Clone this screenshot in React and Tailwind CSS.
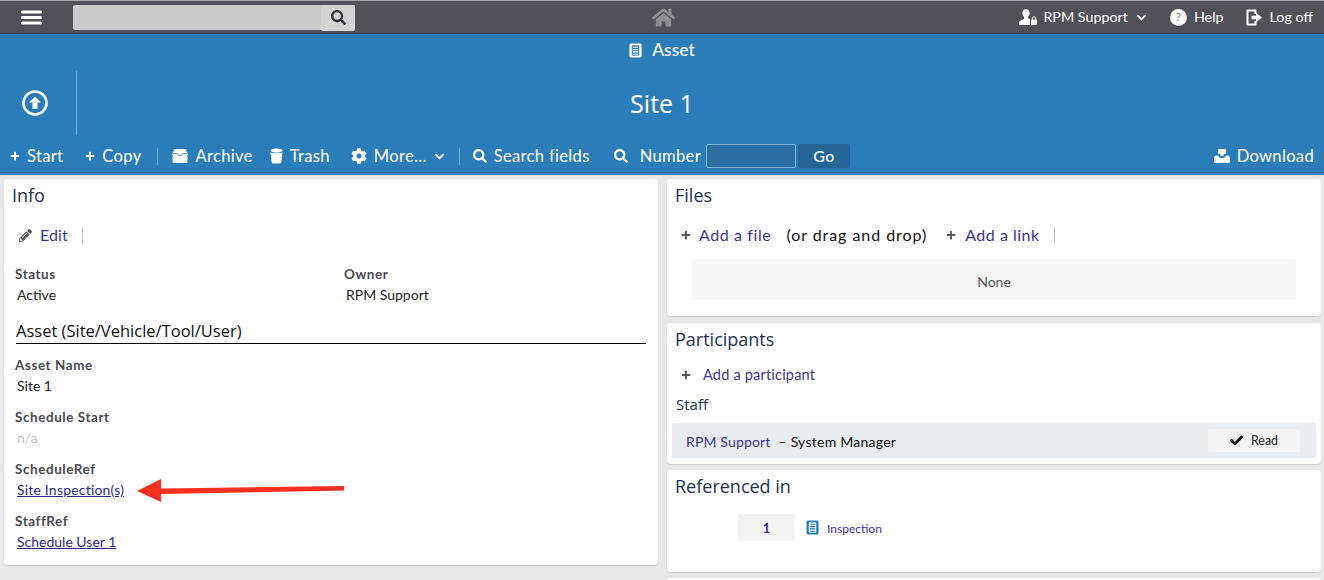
import { FaSearch, FaHome, FaCog, FaChevronDown, FaPencilAlt, FaCheck, FaPlus } from 'react-icons/fa';

const body = "font-['Lato','Liberation_Sans',sans-serif]";

function DocIcon({ className }) {
    return (
        <svg viewBox="0 0 14 16" className={className}>
            <rect x="0.5" y="0.5" width="13" height="15" rx="1.5" fill="currentColor" />
            <rect x="3" y="2.5" width="8" height="11" fill="var(--doc-bg)" />
            <path d="M4 4.5h6M4 7h6M4 9.5h6M4 12h6" stroke="currentColor" strokeWidth="1.2" />
        </svg>
    );
}

function ArchiveIcon() {
    return (
        <svg viewBox="0 0 18 16" className="w-[18px] h-[16px] text-white">
            <path d="M3.500 1h11l2 4.500v8a1.500 1.500 0 0 1-1.500 1.500H3a1.500 1.500 0 0 1-1.500-1.500v-8z" fill="currentColor" />
            <path d="M2 5.500h4.500l1 2h3l1-2H16" fill="none" stroke="#2a7db8" strokeWidth="0.8" />
        </svg>
    );
}

function TrashIcon() {
    return (
        <svg viewBox="0 0 13 16" className="w-[13px] h-[16px] text-white">
            <ellipse cx="6.500" cy="2.500" rx="6" ry="2" fill="currentColor" />
            <path d="M0.500 4.200c2 1.400 10 1.400 12 0l-1.200 10a1.500 1.500 0 0 1-1.500 1.300H3.200a1.500 1.500 0 0 1-1.500-1.300z" fill="currentColor" />
        </svg>
    );
}

function DownloadIcon() {
    return (
        <svg viewBox="0 0 16 14" className="w-[16px] h-[14px] text-white">
            <path d="M4 0h8v5h-2.500v2h-3V5H4z" fill="currentColor" />
            <path d="M1.500 6.500H4l2 2.500h4l2-2.500h2.500l1.500 2V13a1 1 0 0 1-1 1H1a1 1 0 0 1-1-1V8.500z" fill="currentColor" />
        </svg>
    );
}

function UserLockIcon() {
    return (
        <svg viewBox="0 0 18 16" className="w-[18px] h-[16px] text-white">
            <path d="M7 0c2.200 0 3.600 1.800 3.600 4.200 0 1.600-.7 3-1.600 3.800v1.200l2 .9V16H0v-2.300c0-1.600 3.200-2.900 5-3.600V8C4.100 7.200 3.400 5.800 3.400 4.200 3.400 1.800 4.800 0 7 0z" fill="currentColor" />
            <rect x="12" y="10.500" width="6" height="5.500" rx="0.800" fill="currentColor" />
            <path d="M13.300 10.800V9.500a1.700 1.700 0 0 1 3.400 0v1.300" fill="none" stroke="currentColor" strokeWidth="1" />
        </svg>
    );
}

function LogOffIcon() {
    return (
        <svg viewBox="0 0 16 17" className="w-[16px] h-[17px]">
            <path d="M9.500 5V1.500H1.500v14h8V12" fill="none" stroke="white" strokeWidth="2" strokeLinejoin="round" />
            <path d="M5.500 6.800h4.500V3.800l6 4.700-6 4.700v-3H5.500z" fill="white" />
        </svg>
    );
}

function UpCircleIcon() {
    return (
        <svg viewBox="0 0 26 26" className="w-[26px] h-[26px]">
            <circle cx="13" cy="13" r="11.500" fill="none" stroke="white" strokeWidth="2.600" />
            <path d="M13 6.500l6 6h-3.400V19h-5.200v-6.500H7z" fill="white" />
        </svg>
    );
}

function ToolItem({ icon, label, className = '' }) {
    return (
        <span className={`flex items-center gap-[7px] ${className}`}>
            {icon}
            <span>{label}</span>
        </span>
    );
}

function Field({ label, value, className = '' }) {
    return (
        <div className={className}>
            <div className="text-[13.500px] font-bold leading-[18px] text-[#4a4a52] tracking-[0.55px]">{label}</div>
            <div className="mt-[2px] ml-[2px] text-[14px] leading-[20px] text-[#222]">{value}</div>
        </div>
    );
}

function Panel({ title, className = '', children }) {
    return (
        <section className={`bg-white rounded-[4px] shadow-[0_1px_1px_#c8c8c8] ${className}`}>
            <h2 className="pl-2 pt-[4px] font-['Open_Sans',sans-serif] text-[18px] leading-[24px] text-[#1c3350]">{title}</h2>
            {children}
        </section>
    );
}

export default function App() {
    return (
        <div className={`${body} h-[580px] overflow-hidden bg-[#e8e8e8]`}>
            {/* top bar */}
            <header className="h-[34px] flex items-center bg-[#525157] border-t border-t-[#a9a9a9] border-b border-b-[#3d4650] text-white">
                <svg viewBox="0 0 21 15" className="w-[21px] h-[15px] ml-[21px]">
                    <path d="M1.500 2h18M1.500 7.500h18M1.500 13h18" stroke="white" strokeWidth="3" strokeLinecap="round" />
                </svg>
                <div className="ml-[31px] w-[282px] h-[25px] flex justify-end rounded-[2px] bg-[#cbcbcb]">
                    <span className="w-[34px] h-[26px] flex items-center justify-center bg-[#d2d2d2] rounded-[2px] text-[#333338]">
                        <FaSearch size={15} />
                    </span>
                </div>
                <div className="flex-1 flex justify-center">
                    <FaHome size={23} className="text-[#8e8e92] mr-[48px]" />
                </div>
                <nav className="flex items-center text-[14.300px] mr-[11px]">
                    <UserLockIcon />
                    <span className="ml-[6px]">RPM Support</span>
                    <FaChevronDown size={11} className="ml-[8px]" />
                    <span className="ml-[23px] w-[17px] h-[17px] flex items-center justify-center rounded-full bg-white text-[#77777c] text-[11px]">?</span>
                    <span className="ml-[7px]">Help</span>
                    <span className="ml-[22px]"><LogOffIcon /></span>
                    <span className="ml-[8px]">Log off</span>
                </nav>
            </header>

            {/* blue header */}
            <div className="h-[141px] bg-[#2a7db8] text-white flex flex-col">
                <div className="h-[32px] flex items-center justify-center gap-[10px] text-[17.500px] font-medium [--doc-bg:#2a7db8]">
                    <DocIcon className="w-[13px] h-[15px] text-white" />
                    <span>Asset</span>
                </div>
                <div className="mt-[5px] h-[64px] flex items-center">
                    <div className="w-[77px] h-full flex items-center justify-center border-r border-r-[#76a9d0] pr-[7px]">
                        <UpCircleIcon />
                    </div>
                    <div className="flex-1 text-center pr-[77px] font-['Open_Sans',sans-serif] font-medium text-[25px] leading-[32px]">Site 1</div>
                </div>
                <div className="mt-[2px] h-[38px] flex items-center text-[16.600px] tracking-[0.3px] pl-[10px] pr-[10px]">
                    <ToolItem icon={<FaPlus size={10} />} label="Start" className="gap-[6px]" />
                    <ToolItem icon={<FaPlus size={10} />} label="Copy" className="ml-[22px] gap-[6px]" />
                    <span className="ml-[15px] w-px h-[17px] bg-[#76a9d0]" />
                    <ToolItem icon={<ArchiveIcon />} label="Archive" className="ml-[13px]" />
                    <ToolItem icon={<TrashIcon />} label="Trash" className="ml-[17px]" />
                    <ToolItem icon={<FaCog size={16} />} label="More..." className="ml-[21px]" />
                    <FaChevronDown size={11} className="ml-[7px]" />
                    <span className="ml-[14px] w-px h-[17px] bg-[#76a9d0]" />
                    <ToolItem icon={<FaSearch size={14} />} label="Search fields" className="ml-[13px]" />
                    <ToolItem icon={<FaSearch size={14} />} label="Number" className="ml-[24px] gap-[12px]" />
                    <span className="ml-[5px] w-[90px] h-[24px] rounded-[2px] bg-[#2a72a6] border border-[#7fb0d3]" />
                    <span className="ml-[2px] w-[52px] h-[24px] flex items-center justify-center rounded-[2px] bg-[#226695] text-[16px] font-medium">Go</span>
                    <span className="ml-auto"><ToolItem icon={<DownloadIcon />} label="Download" /></span>
                </div>
            </div>

            {/* content */}
            <main className="pt-[4px] pl-[4px] pr-[3px] grid grid-cols-[654px_654px] gap-x-[9px] items-start">
                <Panel title="Info" className="h-[386px]">
                    <div className="mt-[18px] ml-[15px] h-[20px] flex items-center text-[#3a3598] text-[16px] tracking-[0.1px]">
                        <FaPencilAlt size={13} className="text-[#5a5a5e]" />
                        <span className="ml-[8px]">Edit</span>
                        <span className="ml-[14px] w-px h-[17px] bg-[#c8c8c8]" />
                    </div>
                    <div className="mt-[20px] ml-[11px] grid grid-cols-[329px_1fr]">
                        <Field label="Status" value="Active" />
                        <Field label="Owner" value="RPM Support" />
                    </div>
                    <h3 className="mt-[15px] ml-[12px] mr-[12px] pb-px border-b border-b-black font-['Open_Sans',sans-serif] text-[16.500px] leading-[22px] text-[#111]">
                        Asset (Site/Vehicle/Tool/User)
                    </h3>
                    <div className="ml-[11px] mt-[12px] flex flex-col gap-[12px]">
                        <Field label="Asset Name" value="Site 1" />
                        <Field label="Schedule Start" value={<span className="text-[#c4c4c4]">n/a</span>} />
                        <Field label="ScheduleRef" value={<a className="text-[#2b2a92] underline tracking-[0.2px]">Site Inspection(s)</a>} />
                        <Field label="StaffRef" value={<a className="text-[#2b2a92] underline">Schedule User 1</a>} />
                    </div>
                    {/* annotation arrow */}
                    <svg viewBox="0 0 212 26" className="absolute left-[135px] top-[477px] w-[212px] h-[26px]">
                        <path d="M2 14L26 2v9.500L209 9v4.500L26 17v8z" fill="#fb3021" />
                    </svg>
                </Panel>

                <div className="flex flex-col">
                    <Panel title="Files" className="h-[137px]">
                        <div className="mt-[18px] ml-[14px] h-[20px] flex items-center text-[16px]">
                            <FaPlus size={10} className="text-[#555]" />
                            <span className="ml-[8px] text-[#3a3598] tracking-[0.6px]">Add a file</span>
                            <span className="ml-[15px] text-[#111] tracking-[0.95px]">(or drag and drop)</span>
                            <FaPlus size={10} className="ml-[19px] text-[#555]" />
                            <span className="ml-[9px] text-[#3a3598] tracking-[0.5px]">Add a link</span>
                            <span className="ml-[14px] w-px h-[17px] bg-[#c8c8c8]" />
                        </div>
                        <div className="mt-[14px] mx-[25px] h-[41px] pt-[4px] flex items-center justify-center rounded-[2px] bg-[#f7f7f7] text-[14px] text-[#555]">None</div>
                    </Panel>
                    <Panel title="Participants" className="mt-[7px] h-[141px]">
                        <div className="mt-[14px] ml-[14px] h-[20px] flex items-center text-[14.500px] tracking-[0.2px]">
                            <FaPlus size={10} className="text-[#555]" />
                            <span className="ml-[12px] text-[#3a3598]">Add a participant</span>
                        </div>
                        <div className="mt-[8px] ml-[9px] text-[15px] leading-[22px] text-[#1c3350] font-['Open_Sans',sans-serif]">Staff</div>
                        <div className="mt-[8px] mx-[5px] h-[35px] flex items-center rounded-[2px] bg-[#e9ecef] pl-[14px] pr-[16px] text-[14px]">
                            <span className="pt-[2px] text-[#3a3598] tracking-[0.15px]">RPM Support</span>
                            <span className="pt-[2px] ml-[8px] text-[#111] tracking-[0.25px]">– System Manager</span>
                            <span className="ml-auto w-[92px] h-[23px] flex items-center justify-center gap-[8px] rounded-[2px] bg-[#f3f3f3] text-[12.500px] text-[#222]">
                                <FaCheck size={13} className="text-black" />
                                <span className="pt-[2px]">Read</span>
                            </span>
                        </div>
                    </Panel>
                    <Panel title="Referenced in" className="mt-[6px] h-[102px]">
                        <div className="mt-[16px] ml-[71px] flex items-center">
                            <span className="w-[57px] h-[27px] pt-[2px] flex items-center justify-center rounded-[2px] bg-[#f3f3f3] text-[13px] font-bold text-[#4a2f86]">1</span>
                            <span className="ml-[11px] [--doc-bg:white]"><DocIcon className="w-[13px] h-[15px] text-[#2a7db8]" /></span>
                            <span className="ml-[8px] mt-[3px] text-[12px] text-[#3a3598]">Inspection</span>
                        </div>
                    </Panel>
                    <section className="mt-[6px] h-[40px] bg-white rounded-[4px]" />
                </div>
            </main>
        </div>
    );
}
